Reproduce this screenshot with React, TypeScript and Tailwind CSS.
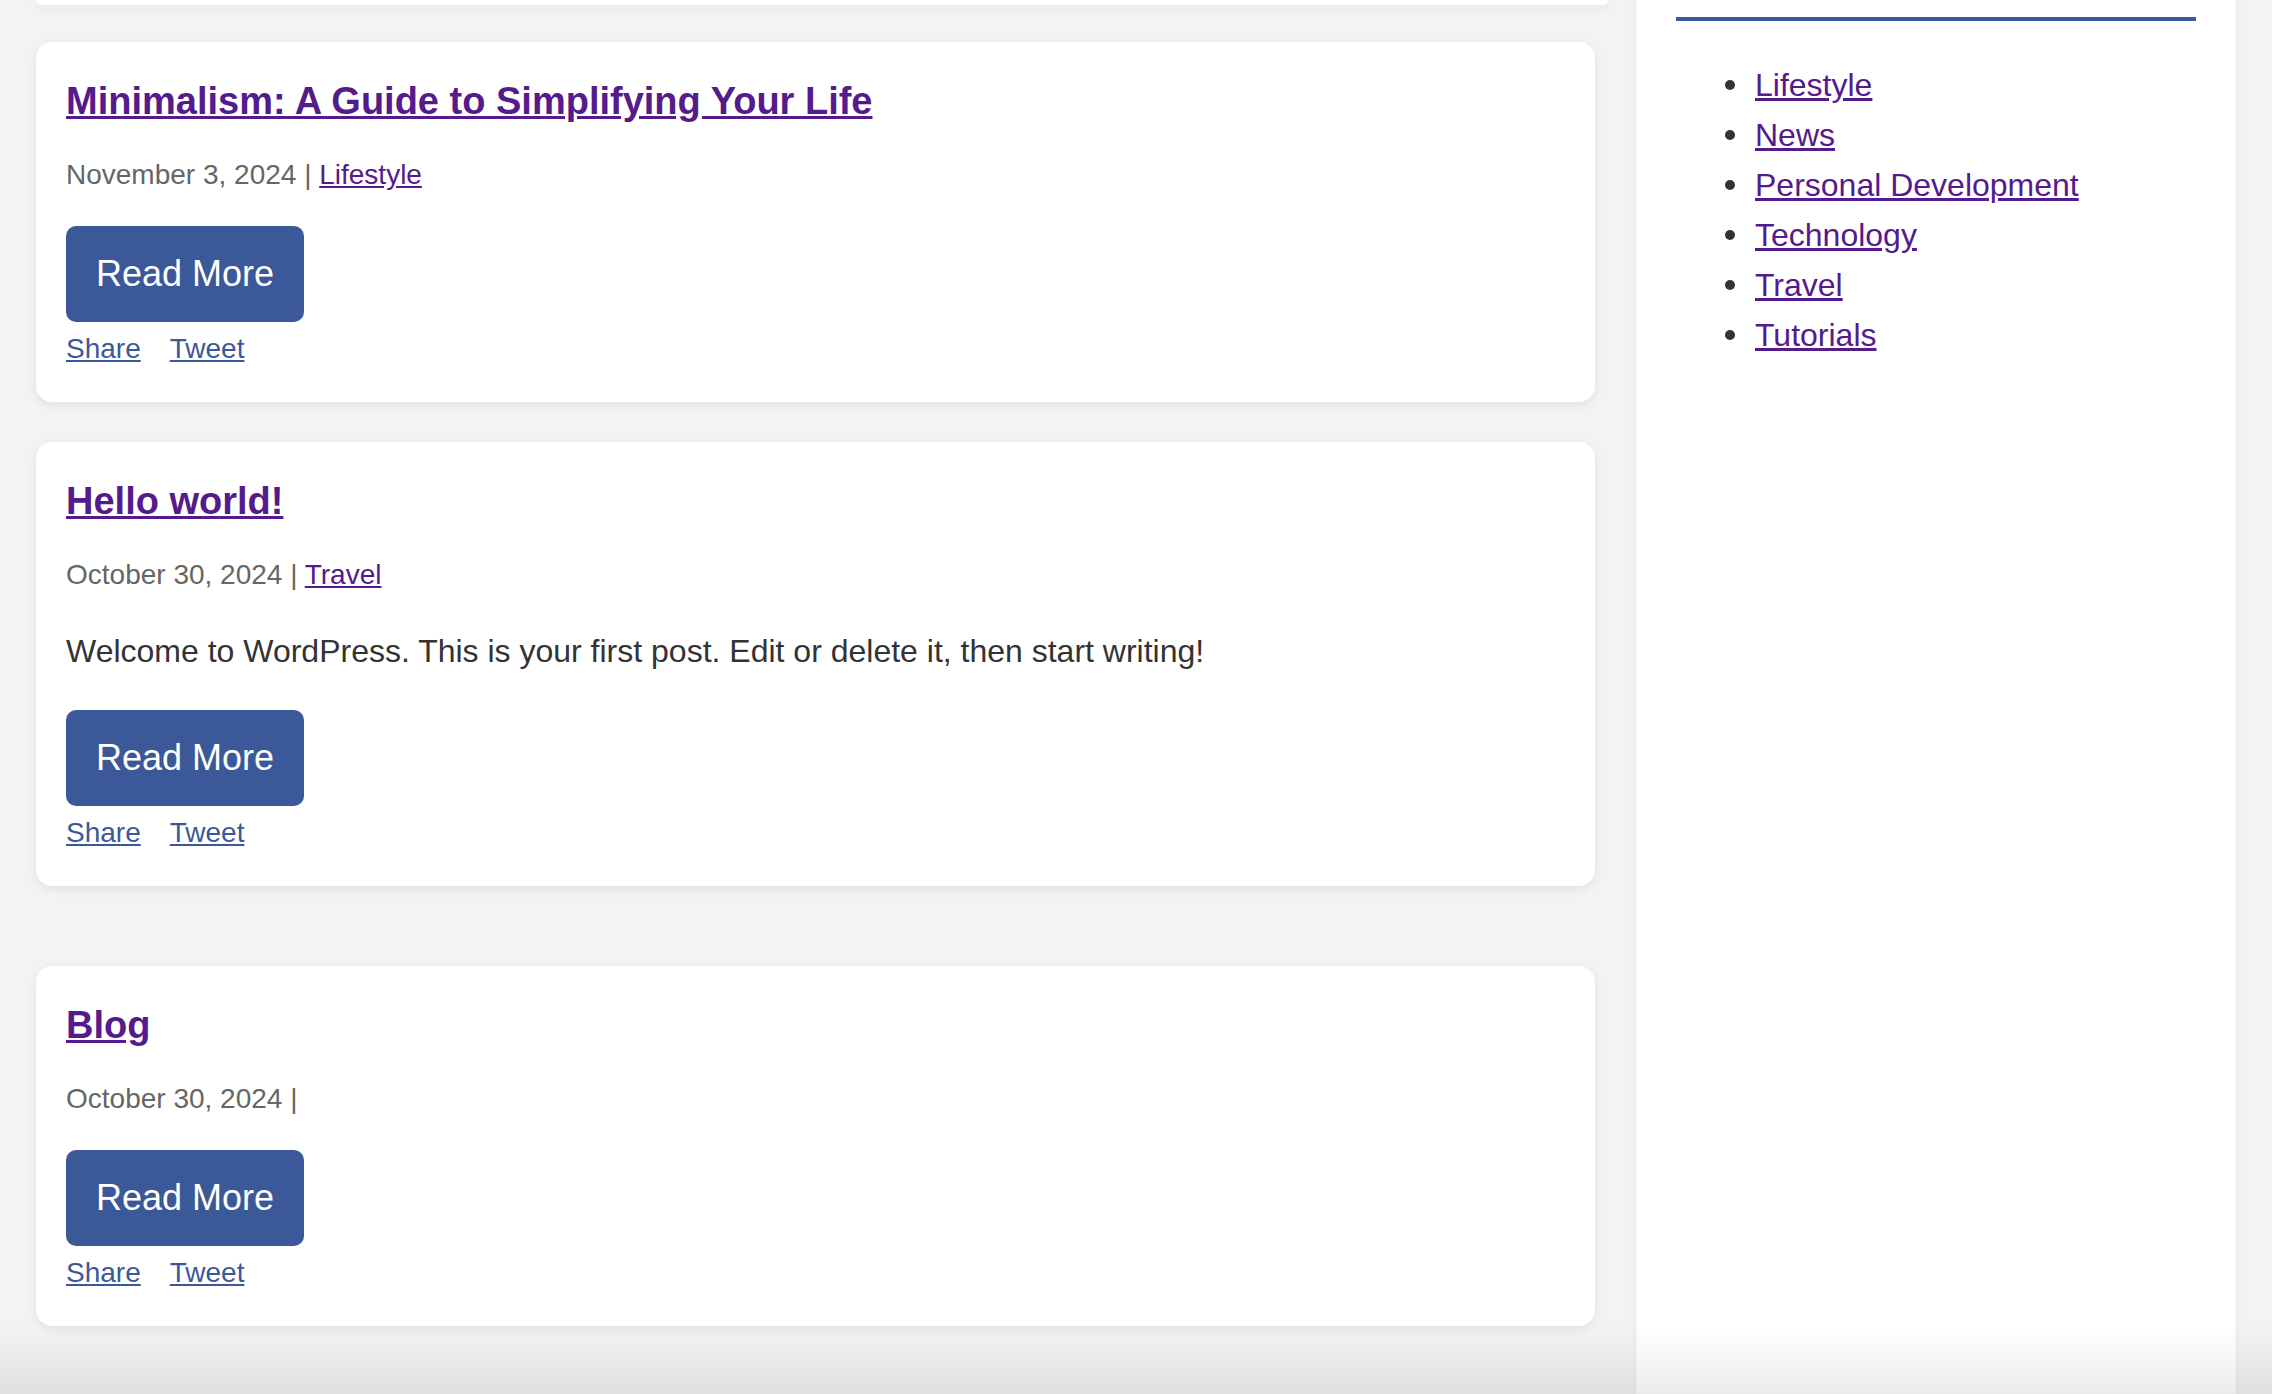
const POSTS: ReadonlyArray<{
  title: string;
  date: string;
  category?: string;
  excerpt?: string;
}> = [
  {
    title: "Minimalism: A Guide to Simplifying Your Life",
    date: "November 3, 2024",
    category: "Lifestyle",
  },
  {
    title: "Hello world!",
    date: "October 30, 2024",
    category: "Travel",
    excerpt:
      "Welcome to WordPress. This is your first post. Edit or delete it, then start writing!",
  },
  {
    title: "Blog",
    date: "October 30, 2024",
  },
];

const CATEGORIES = [
  "Lifestyle",
  "News",
  "Personal Development",
  "Technology",
  "Travel",
  "Tutorials",
];

function PostCard({
  title,
  date,
  category,
  excerpt,
  className = "",
}: {
  title: string;
  date: string;
  category?: string;
  excerpt?: string;
  className?: string;
}) {
  return (
    <article
      className={[
        "rounded-[16px] bg-white px-[30px] pt-[37px] pb-[37px] shadow-[0_3px_10px_rgba(0,0,0,0.08)]",
        className,
      ].join(" ")}
    >
      <h2 className="text-[38px] font-bold leading-[44px]">
        <a href="#" className="text-[#551a8b] underline">
          {title}
        </a>
      </h2>
      <p className="mt-[36px] text-[28px] leading-[32px] text-[#666666]">
        {date} |{" "}
        {category ? (
          <a href="#" className="text-[#551a8b] underline">
            {category}
          </a>
        ) : null}
      </p>
      {excerpt ? (
        <p className="mt-[42px] text-[32px] leading-[37px] text-[#333333]">{excerpt}</p>
      ) : null}
      <a
        href="#"
        className={[
          "flex h-[96px] w-[238px] items-center justify-center rounded-[10px] bg-[#3b5998] text-[36px] leading-none text-white",
          excerpt ? "mt-[40px]" : "mt-[35px]",
        ].join(" ")}
      >
        Read More
      </a>
      <div className="mt-[11px] flex gap-[29px] text-[28px] leading-[32px] text-[#3b5998]">
        <a href="#" className="underline">
          Share
        </a>
        <a href="#" className="underline">
          Tweet
        </a>
      </div>
    </article>
  );
}

export default function App() {
  return (
    <div className="relative flex h-screen w-full gap-[41px] overflow-hidden bg-[#f3f3f3] px-[36px] font-['Liberation_Sans',Arial,sans-serif]">
      <main className="w-[1559px] shrink-0">
        {/* previous post, scrolled almost out of view */}
        <div className="h-[5px] w-[1572px] rounded-b-[16px] bg-white shadow-[0_3px_10px_rgba(0,0,0,0.08)]" />
        <div className="mt-[37px]">
          <PostCard {...POSTS[0]} />
          <PostCard {...POSTS[1]} className="mt-[40px]" />
          <PostCard {...POSTS[2]} className="mt-[80px]" />
        </div>
      </main>

      <aside className="w-[600px] shrink-0 self-stretch bg-white px-[40px] pt-[17px] shadow-[0_0_6px_rgba(0,0,0,0.06)]">
        <div className="h-[4px] w-full bg-[#3b5998]" />
        <ul className="mt-[39px] pl-[49px] text-[32px] leading-[50px]">
          {CATEGORIES.map((name) => (
            <li key={name} className="flex items-center gap-[20px]">
              <span className="h-[10px] w-[10px] shrink-0 rounded-full bg-[#333333]" aria-hidden />
              <a href="#" className="text-[#551a8b] underline">
                {name}
              </a>
            </li>
          ))}
        </ul>
      </aside>

      <div className="pointer-events-none absolute inset-x-0 bottom-0 h-[70px] bg-linear-to-b from-transparent to-black/[0.08]" />
    </div>
  );
}
